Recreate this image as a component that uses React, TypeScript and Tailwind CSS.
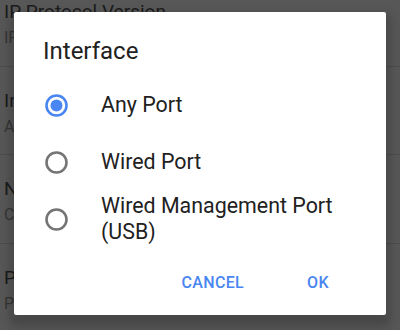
import React from "react";

const settings = [
  { title: "IP Protocol Version", sub: "IPv4 Only" },
  { title: "Interface", sub: "Any Port" },
  { title: "NAT Traversal", sub: "Cloud Relay" },
  { title: "Port", sub: "Port 8080" },
];

const options = ["Any Port", "Wired Port", "Wired Management Port (USB)"];

export default function App() {
  return (
    <div
      className="relative w-[400px] h-[330px] overflow-hidden bg-[#575757]"
      style={{ fontFamily: "Roboto, 'Liberation Sans', sans-serif" }}
    >
      {/* dimmed settings list behind the dialog */}
      <div className="-mt-[23px]">
        {settings.map((s) => (
          <div key={s.title} className="h-[88.5px] border-t border-[#4c4c4c] pl-[4px] pt-[22px]">
            <div className="text-[19px] leading-[24px] text-[#1b1b1b]">{s.title}</div>
            <div className="mt-[2px] text-[16px] leading-[24px] text-[#353535]">{s.sub}</div>
          </div>
        ))}
      </div>

      <Dialog />
    </div>
  );
}

const Dialog = () => (
  <div className="absolute left-[14px] top-[12px] w-[372px] h-[303px] rounded-[2px] bg-white shadow-[0_7px_10px_5px_rgba(0,0,0,0.18)] flex flex-col">
    <div className="pt-[25px] pl-[29px] text-[24px] leading-[28px] text-[#212121]">
      Interface
    </div>
    <div className="mt-[11.5px] flex flex-col">
      {options.map((o, i) => (
        <RadioRow key={o} label={o} checked={i === 0} />
      ))}
    </div>
    <div className="mt-[17px] flex justify-end gap-[34px] pr-[36px]">
      <button className="h-[36px] px-[8px] text-[16px] font-medium tracking-[0.02em] text-[#4a86f1]">
        CANCEL
      </button>
      <button className="h-[36px] w-[64px] text-[16px] font-medium tracking-[0.02em] text-[#4a86f1]">
        OK
      </button>
    </div>
  </div>
);

const RadioRow = ({ label, checked }: { label: string; checked: boolean }) => (
  <div className="min-h-[57px] flex items-center pl-[31px] pr-[24px]">
    <svg width="23" height="23" viewBox="0 0 23 23" className="shrink-0">
      <circle
        cx="11.5"
        cy="11.5"
        r="10"
        fill="none"
        stroke={checked ? "#4a86f1" : "#757575"}
        strokeWidth="2.6"
      />
      {checked && <circle cx="11.5" cy="11.5" r="6" fill="#4a86f1" />}
    </svg>
    <div className="ml-[33px] text-[21.4px] leading-[26px] text-[#212121]">{label}</div>
  </div>
);
